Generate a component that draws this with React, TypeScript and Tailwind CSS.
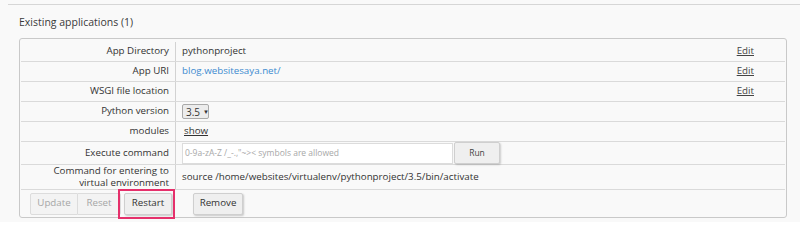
import React from "react";

function Row({
  label,
  h,
  children,
  edit,
  extra,
}: {
  label: React.ReactNode;
  h: string;
  children?: React.ReactNode;
  edit?: boolean;
  extra?: string;
}) {
  return (
    <div className={`flex ${h} ${extra ?? ""} border-b border-[#dadada]`}>
      <div className="w-[155px] shrink-0 flex items-center justify-end text-right pr-[6px] border-r border-[#d2d2d2] leading-[12.5px]">
        {label}
      </div>
      <div className="flex-1 flex items-center pl-[6px]">{children}</div>
      {edit && (
        <div className="flex items-center pr-[31px]">
          <span className="underline text-[#444]">Edit</span>
        </div>
      )}
    </div>
  );
}

export default function App() {
  return (
    <div className="w-[800px] h-[222px] overflow-hidden bg-[#f9f9f9] font-['Open_Sans',sans-serif] text-[#333]">
      <div className="ml-[8px] mt-[4px] border-t border-[#d6d6d6] pl-[11px] pr-[13px]">
        <h2 className="mt-[10px] mb-[9px] text-[10.5px] leading-[14px] font-normal text-[#3a3a3a]">
          Existing applications (1)
        </h2>
        <div className="border border-[#c9c9c9] rounded-[3px] p-[1px] pb-0 text-[9.75px]">
          <Row label="App Directory" h="h-[22px]" extra="pt-[2px]" edit>
            pythonproject
          </Row>
          <Row label="App URI" h="h-[20px]" edit>
            <span className="text-[#3d8bd0]">blog.websitesaya.net/</span>
          </Row>
          <Row label="WSGI file location" h="h-[20px]" edit />
          <Row label="Python version" h="h-[20px]">
            <div className="h-[15px] w-[27px] flex items-center gap-[3px] pl-[3px] border border-[#a9a9a9] rounded-[2px] bg-[#ececec] text-[10px] leading-none">
              <span>3.5</span>
              <span className="text-[6px]">▼</span>
            </div>
          </Row>
          <Row label="modules" h="h-[20px]">
            <span className="underline ml-[2px]">show</span>
          </Row>
          <Row label="Execute command" h="h-[23px]">
            <div className="flex items-center">
              <div className="w-[271px] h-[21px] bg-white border border-[#dcdcdc] flex items-center pl-[2px] text-[8.5px] text-[#a8a8a8]">
                {'0-9a-zA-Z /_-.,"~>< symbols are allowed'}
              </div>
              <div className="ml-[1px] w-[46px] h-[22px] flex items-center justify-center bg-[#efefef] border border-[#cfcfcf] rounded-[2px] shadow-[1px_1px_2px_rgba(0,0,0,0.18)] text-[8.5px] text-[#444]">
                Run
              </div>
            </div>
          </Row>
          <Row
            label={
              <span>
                Command for entering to
                <br />
                virtual environment
              </span>
            }
            h="h-[25px]"
          >
            source /home/websites/virtualenv/pythonproject/3.5/bin/activate
          </Row>
          <div className="flex items-center h-[27px] pl-[9px]">
            <div className="w-[48px] h-[22px] flex items-center justify-center bg-[#f3f3f3] border border-[#dcdcdc] rounded-l-[2px] text-[#a6a6a6]">
              Update
            </div>
            <div className="w-[43px] h-[22px] flex items-center justify-center bg-[#f3f3f3] border border-l-0 border-[#dcdcdc] rounded-r-[2px] text-[#a6a6a6]">
              Reset
            </div>
            <div className="relative ml-[3px]">
              <div className="w-[48px] h-[22px] flex items-center justify-center bg-[#efefef] border border-[#cfcfcf] rounded-[2px] shadow-[1px_1px_2px_rgba(0,0,0,0.2)]">
                Restart
              </div>
              <div className="absolute -left-[6px] -right-[3px] -top-[4px] -bottom-[4px] border-2 border-[#e5306b]" />
            </div>
            <div className="ml-[21px] w-[50px] h-[22px] flex items-center justify-center bg-[#efefef] border border-[#cfcfcf] rounded-[2px] shadow-[1px_1px_2px_rgba(0,0,0,0.2)]">
              Remove
            </div>
          </div>
        </div>
      </div>
    </div>
  );
}
